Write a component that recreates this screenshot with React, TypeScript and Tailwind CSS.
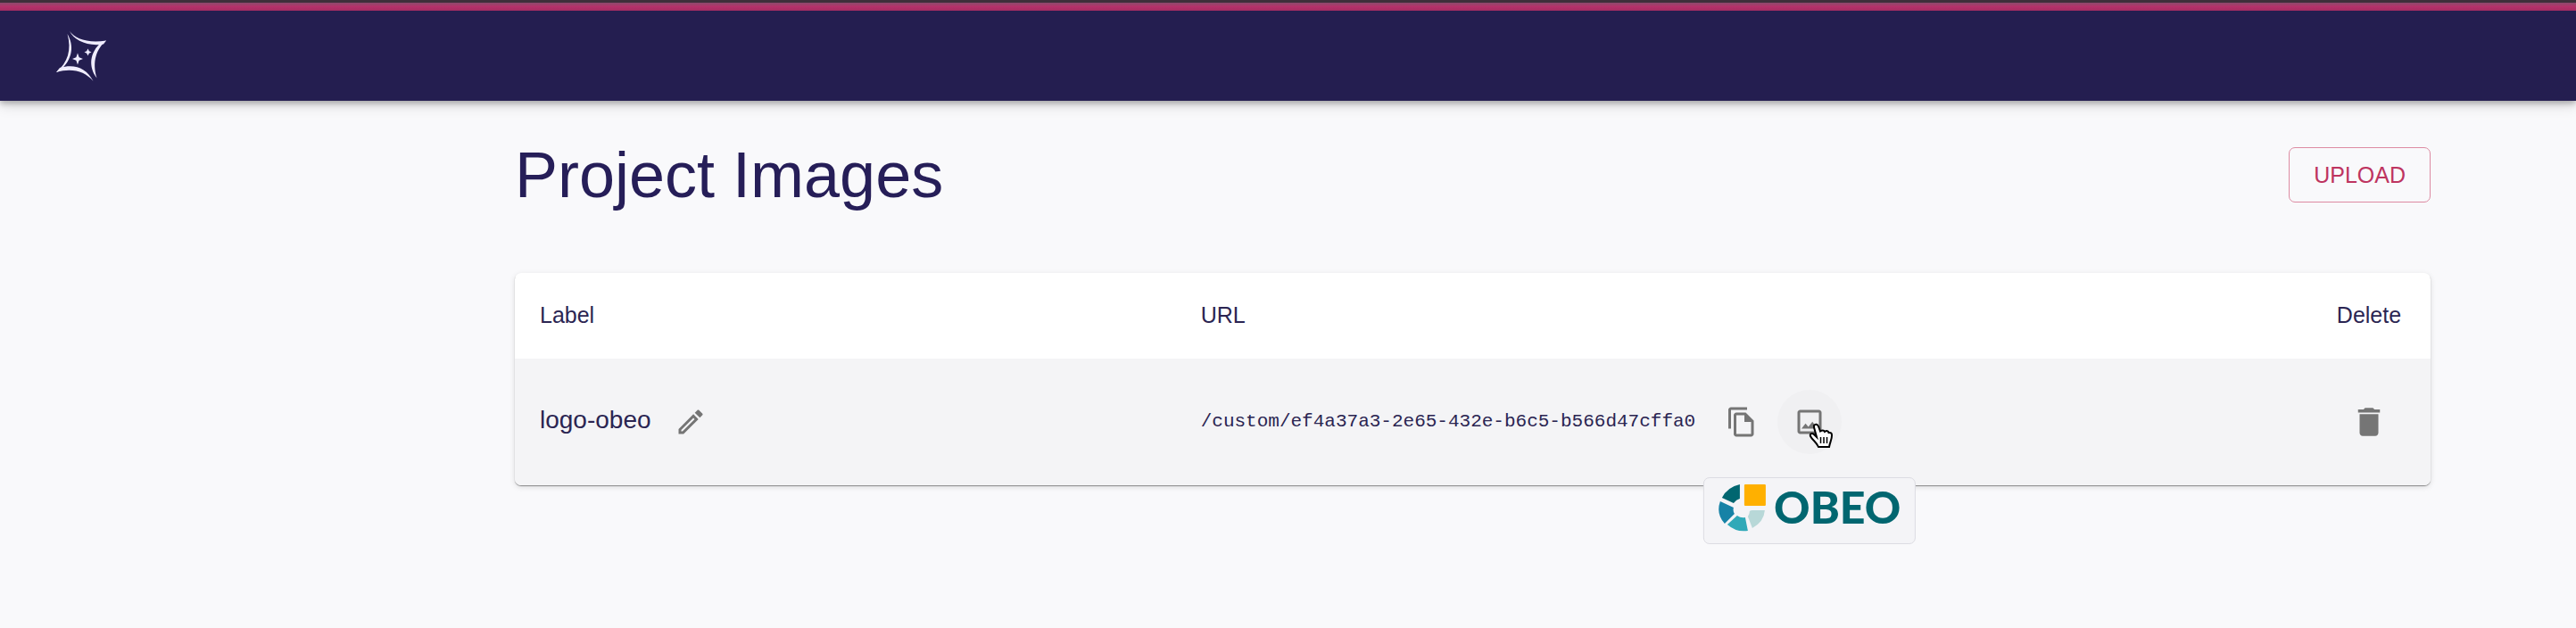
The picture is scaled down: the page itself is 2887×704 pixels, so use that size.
import { MdOutlineEdit, MdDelete } from "react-icons/md";

function Logo() {
  return (
    <svg viewBox="0 0 56 56" className="h-14 w-14 fill-[#f0edff]" aria-hidden="true">
      <path d="M15 0C21 8 35 14 56 10.500L53 14.500C35 17.500 20 10 15 0Z" />
      <path d="M56 10.500C45 20 40 34 45.500 52.500C36 40 37 24 51 12Z" />
      <path d="M0 46L4 41C20 36 34 41 41.500 56C32 45 18 41 0 46Z" />
      <path d="M12.500 3C20 16 19 31 4 44.500L0 46C13 35 17.500 21 12.500 3Z" />
      <path d="M24 24.500L25.600 29.200L30 31L25.600 32.800L24 37.500L22.400 32.800L18 31L22.400 29.200Z" />
      <path d="M35.500 19.500L36.800 22.200L39.500 23.500L36.800 24.800L35.500 27.500L34.200 24.800L31.500 23.500L34.200 22.200Z" />
    </svg>
  );
}

function CopyIcon() {
  return (
    <svg viewBox="0 0 24 24" className="h-9 w-9 fill-current" aria-hidden="true">
      <path d="M16 1H4c-1.1 0-2 .9-2 2v14h2V3h12V1zm-1 4H8c-1.1 0-1.99.9-1.99 2L6 21c0 1.1.89 2 1.99 2H19c1.1 0 2-.9 2-2V11l-6-6zM8 21V7h6v5h5v9H8z" />
    </svg>
  );
}

function ImageIcon() {
  return (
    <svg viewBox="0 0 24 24" className="h-9 w-9 fill-current" aria-hidden="true">
      <path d="M19 5v14H5V5h14m0-2H5c-1.1 0-2 .9-2 2v14c0 1.1.9 2 2 2h14c1.1 0 2-.9 2-2V5c0-1.100-.9-2-2-2z" />
      <path d="M14.140 11.860l-3 3.870L9 13.140 6 17h12l-3.860-5.140z" />
    </svg>
  );
}

function HandCursor() {
  return (
    <svg viewBox="0 0 28 29" className="pointer-events-none absolute top-[37px] left-[35px] h-[29px] w-7" aria-hidden="true">
      <path
        d="M6 3C7.500 1 10 1.500 11 4L13 9.500C15 8 17 8 18 10C20 8.500 22 9 22.500 11C25 10.500 26 12 26 14C26 19 24 21 23 27H11C9 22 4 19 2 15C1 12 4 11 6 13L9 16L6 5Z"
        className="fill-white stroke-black stroke-2"
      />
      <path d="M13.500 16V23M17 16V23M20.500 16V23" className="fill-none stroke-black stroke-[1.5]" />
    </svg>
  );
}

function ObeoMark() {
  return (
    <svg viewBox="0 0 54 54" className="h-[54px] w-[54px]" aria-hidden="true">
      <rect x="29" y="0" width="24" height="24" rx="1" fill="#ffb000" />
      <path d="M24 0V16Q20 17 17 21L4 15Q10 3 24 0Z" fill="#016670" />
      <path d="M2 19L17 26Q16 30 18 33L7 44Q-3 33 2 19Z" fill="#1782a6" />
      <path d="M21 35Q25 38 30 37L33 52Q20 54 10 45Z" fill="#30a9b8" />
      <path d="M33 36Q35 33 35 30Q36 29 38 29H52Q51 42 38 49Z" fill="#b8d8d8" />
    </svg>
  );
}

const iconButton = "flex items-center justify-center rounded-full p-[18px] text-[#757575]";

export default function App() {
  return (
    <div className="min-h-screen bg-[#f9f9fb] font-['Liberation_Sans',Arial,sans-serif] text-[#261e58]">
      <header className="border-t-[3px] border-[#3e2f3a] bg-[#241e50] shadow-[0_3px_6px_rgba(0,0,0,0.25),0_6px_14px_rgba(0,0,0,0.12)]">
        <div className="h-[9px] bg-linear-to-b from-[#8c486c] via-[#b4316a] to-[#a52c62]" />
        <div className="flex h-[101px] items-center px-[63px]">
          <a href="#" aria-label="Home">
            <Logo />
          </a>
        </div>
      </header>
      <main className="pt-[47px] pr-[163px] pl-[577px]">
        <div className="flex items-center justify-between">
          <h1 className="text-[72px] leading-[72px]">Project Images</h1>
          <button type="button" className="rounded-[7px] border border-[#dd8ba2] px-[27px] py-4 text-[25px] leading-7 text-[#be3460]">
            UPLOAD
          </button>
        </div>
        <div className="mt-[74px] rounded-[7px] bg-white shadow-[0_1px_1px_rgba(0,0,0,0.4),0_2px_6px_rgba(0,0,0,0.12)]">
          <table className="w-full table-fixed text-left text-[#2b2552]">
            <thead>
              <tr className="h-24 text-[25px]">
                <th scope="col" className="w-[34.5%] px-7 font-normal">Label</th>
                <th scope="col" className="px-7 font-normal">URL</th>
                <th scope="col" className="w-[138px] text-center font-normal">Delete</th>
              </tr>
            </thead>
            <tbody>
              <tr className="h-[142px] bg-[#f4f4f6]">
                <td className="rounded-bl-[7px] px-7">
                  <div className="flex items-center gap-2 text-[28px]">
                    <span className="pb-1">logo-obeo</span>
                    <button type="button" aria-label="Edit label" className={iconButton}>
                      <MdOutlineEdit className="h-9 w-9" />
                    </button>
                  </div>
                </td>
                <td className="px-7">
                  <div className="flex items-center gap-1">
                    <span className="mr-3 font-['Liberation_Mono','Courier_New',monospace] text-[21px]">
                      /custom/ef4a37a3-2e65-432e-b6c5-b566d47cffa0
                    </span>
                    <button type="button" aria-label="Copy URL" className={iconButton}>
                      <CopyIcon />
                    </button>
                    <div className="relative">
                      <button type="button" aria-label="Show image" className={`${iconButton} bg-[#f0f0f2]`}>
                        <ImageIcon />
                      </button>
                      <HandCursor />
                      <div
                        role="tooltip"
                        className="absolute top-[98px] left-1/2 flex -translate-x-1/2 items-center gap-2 rounded-[7px] border border-[#dcdce2] bg-[#f4f4f7] px-4 pt-[7px] pb-3"
                      >
                        <ObeoMark />
                        <span className="pb-1 font-[Lato,sans-serif] text-[50px] leading-[50px] font-black text-[#016670]">OBEO</span>
                      </div>
                    </div>
                  </div>
                </td>
                <td className="rounded-br-[7px]">
                  <button type="button" aria-label="Delete image" className="mx-auto flex p-5 text-[#757575]">
                    <MdDelete className="h-[42px] w-[42px]" />
                  </button>
                </td>
              </tr>
            </tbody>
          </table>
        </div>
      </main>
    </div>
  );
}
